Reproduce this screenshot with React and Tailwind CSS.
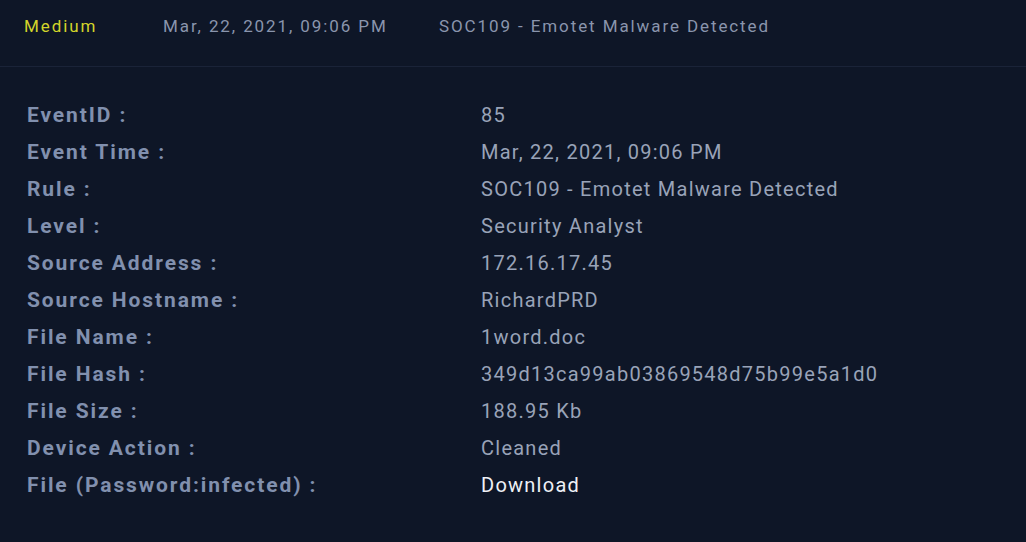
import React from "react";

const details = [
  { label: "EventID :", value: "85" },
  { label: "Event Time :", value: "Mar, 22, 2021, 09:06 PM" },
  { label: "Rule :", value: "SOC109 - Emotet Malware Detected" },
  { label: "Level :", value: "Security Analyst" },
  { label: "Source Address :", value: "172.16.17.45" },
  { label: "Source Hostname :", value: "RichardPRD" },
  { label: "File Name :", value: "1word.doc" },
  { label: "File Hash :", value: "349d13ca99ab03869548d75b99e5a1d0" },
  { label: "File Size :", value: "188.95 Kb" },
  { label: "Device Action :", value: "Cleaned" },
  { label: "File (Password:infected) :", value: "Download", link: true },
];

const App = () => {
  return (
    <div
      className="w-[1026px] h-[542px] bg-[#0e1627] overflow-hidden"
      style={{ fontFamily: "Roboto, 'Noto Sans', sans-serif" }}
    >
      {/* alert header */}
      <div className="h-[67px] border-b border-[#1a2338] flex items-start pt-[15px] pl-[24px] text-[17px] tracking-[1.9px] leading-[22px]">
        <span className="text-[#d3d52a] w-[139px]">Medium</span>
        <span className="text-[#8a95ad] w-[276px]">Mar, 22, 2021, 09:06 PM</span>
        <span className="text-[#8a95ad]">SOC109 - Emotet Malware Detected</span>
      </div>

      {/* event details */}
      <div className="pt-[30px] pl-[27px] flex flex-col">
        {details.map((row) => (
          <div key={row.label} className="flex h-[37px] items-baseline leading-[37px] text-[20px]">
            <span className="w-[454px] text-[21px] font-bold text-[#8190ae] tracking-[1.9px]">
              {row.label}
            </span>
            <span
              className={
                row.link
                  ? "text-[#eef1f6] cursor-pointer tracking-[1.25px]"
                  : "text-[#99a3b8] tracking-[1.25px]"
              }
            >
              {row.value}
            </span>
          </div>
        ))}
      </div>
    </div>
  );
};

export default App;
